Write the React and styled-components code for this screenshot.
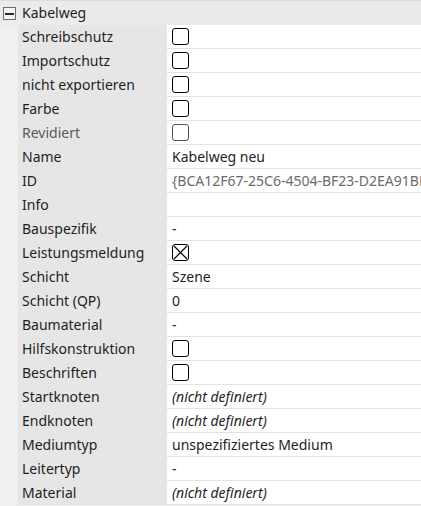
import React from 'react';
import styled, { createGlobalStyle } from 'styled-components';

const GlobalStyle = createGlobalStyle`
  html, body {
    margin: 0;
    padding: 0;
    background: #ffffff;
  }
  body {
    font-family: "Noto Sans", "Open Sans", sans-serif;
    font-size: 14px;
    color: #1e1e1e;
  }
`

const rows = [
  { label: 'Schreibschutz', type: 'check' },
  { label: 'Importschutz', type: 'check' },
  { label: 'nicht exportieren', type: 'check' },
  { label: 'Farbe', type: 'check' },
  { label: 'Revidiert', type: 'check', disabled: true },
  { label: 'Name', value: 'Kabelweg neu' },
  { label: 'ID', value: '{BCA12F67-25C6-4504-BF23-D2EA91BE0C11}', muted: true },
  { label: 'Info', value: '' },
  { label: 'Bauspezifik', value: '-' },
  { label: 'Leistungsmeldung', type: 'check', checked: true },
  { label: 'Schicht', value: 'Szene' },
  { label: 'Schicht (QP)', value: '0' },
  { label: 'Baumaterial', value: '-' },
  { label: 'Hilfskonstruktion', type: 'check' },
  { label: 'Beschriften', type: 'check' },
  { label: 'Startknoten', value: '(nicht definiert)', italic: true },
  { label: 'Endknoten', value: '(nicht definiert)', italic: true },
  { label: 'Mediumtyp', value: 'unspezifiziertes Medium' },
  { label: 'Leitertyp', value: '-' },
  { label: 'Material', value: '(nicht definiert)', italic: true },
]

function CheckBox({ checked, disabled }) {
  return (
    <Box disabled={disabled}>
      {checked && (
        <svg width="15" height="15" viewBox="0 0 15 15">
          <path d="M1 1 L14 14 M14 1 L1 14" stroke="#000" strokeWidth="1.1" fill="none" />
        </svg>
      )}
    </Box>
  )
}

export default function App() {
  return (
    <Grid>
      <GlobalStyle />
      <Header>
        <Toggle>
          <Minus />
        </Toggle>
        <HeaderTitle>Kabelweg</HeaderTitle>
      </Header>
      {rows.map((r, i) => (
        <Row key={i}>
          <Gutter />
          <Label muted={r.disabled}>{r.label}</Label>
          <Value muted={r.muted} italic={r.italic}>
            {r.type === 'check'
              ? <CheckBox checked={r.checked} disabled={r.disabled} />
              : r.value}
          </Value>
        </Row>
      ))}
    </Grid>
  )
}

const Grid = styled.div`
  width: 421px;
  height: 506px;
  overflow: hidden;
  background: #f0f0f0;
`

const Header = styled.div`
  display: flex;
  align-items: center;
  height: 24px;
  background: #ebebeb;
  border-top: 1px solid #dcdcdc;
`

const Toggle = styled.div`
  width: 11px;
  height: 11px;
  margin-left: 3px;
  margin-right: 6px;
  margin-top: 1px;
  border: 1px solid #6e6e6e;
  display: flex;
  align-items: center;
  justify-content: center;
  background: #f4f4f4;
`

const Minus = styled.div`
  width: 9px;
  height: 2px;
  background: #2a2a2a;
`

const HeaderTitle = styled.span`
  color: #1e1e1e;
  white-space: nowrap;
  margin-top: -1px;
`

const Row = styled.div`
  display: grid;
  grid-template-columns: 18px 149px 1fr;
  height: 24px;
`

const Gutter = styled.div`
  background: #f0f0f0;
`

const Label = styled.div`
  background: #e6e6e6;
  padding-left: 4px;
  padding-bottom: 1px;
  display: flex;
  align-items: center;
  white-space: nowrap;
  overflow: hidden;
  color: ${({ muted }) => (muted ? '#5a5a5a' : '#1e1e1e')};
`

const Value = styled.div`
  background: #ffffff;
  border-bottom: 1px solid #e3e3e3;
  padding-left: 5px;
  display: flex;
  align-items: center;
  white-space: nowrap;
  overflow: hidden;
  font-style: ${({ italic }) => (italic ? 'italic' : 'normal')};
  color: ${({ muted }) => (muted ? '#6b6b6b' : '#1e1e1e')};
`

const Box = styled.div`
  width: 17px;
  height: 17px;
  box-sizing: border-box;
  border: 1px solid ${({ disabled }) => (disabled ? '#555555' : '#000000')};
  border-radius: 3px;
  display: flex;
  align-items: center;
  justify-content: center;
`
